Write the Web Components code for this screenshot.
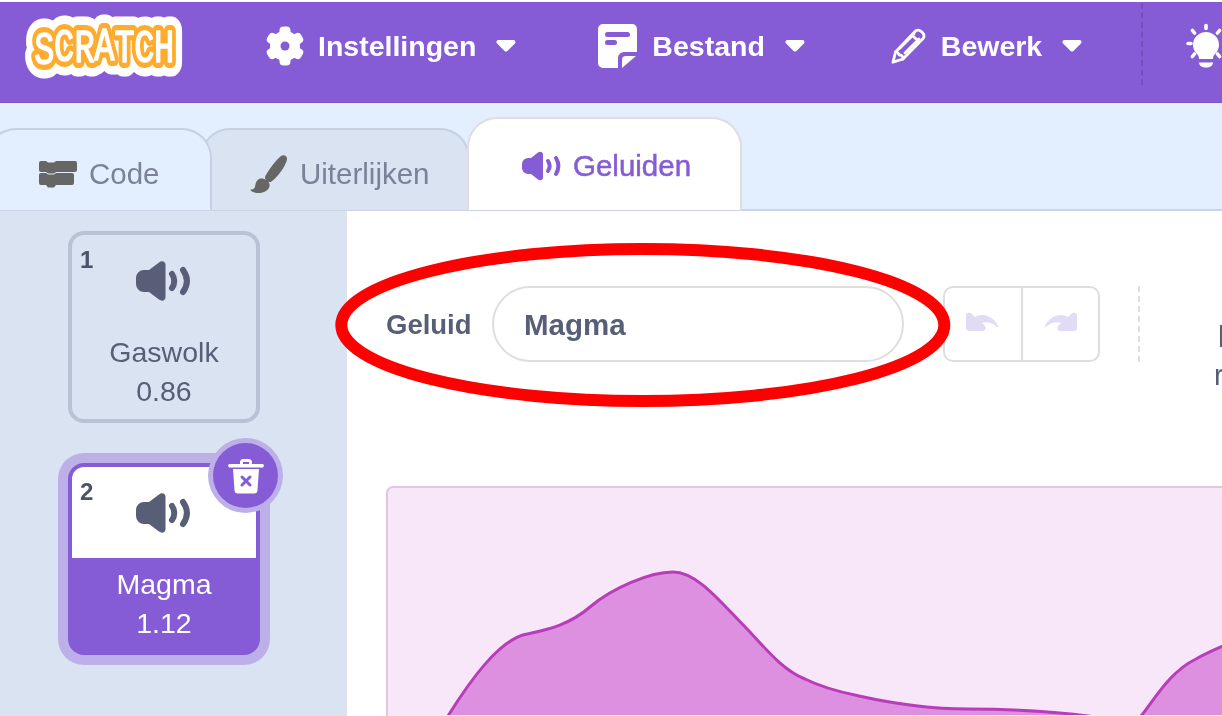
<!DOCTYPE html>
<html lang="nl">
<head>
<meta charset="utf-8">
<title>Scratch geluiden</title>
<style>
  html, body { margin: 0; height: 716px; overflow: hidden; background: #fff; }
  body { font-family: "Liberation Sans", Arial, sans-serif; color: #575e75; position: relative; }
</style>
</head>
<body>
<editor-shell>
  <menu-bar slot="menu">
    <scratch-logo></scratch-logo>
    <menu-item icon="gear" w="36" h="40" style="margin-left:84px">Instellingen</menu-item>
    <menu-item icon="file" w="39" h="44" style="margin-left:82px">Bestand</menu-item>
    <menu-item icon="pencil" w="36" h="36" style="margin-left:85px">Bewerk</menu-item>
    <menu-divider></menu-divider>
    <sc-icon name="bulb" w="44" h="48" style="margin:-10px 0 0 41px"></sc-icon>
  </menu-bar>
  <tab-row slot="tabs">
    <tab-item icon="code" w="38" h="28" state="first">Code</tab-item>
    <tab-item icon="brush" w="38" h="38" state="back">Uiterlijken</tab-item>
    <tab-item icon="speaker-purple" w="39" h="30" state="active">Geluiden</tab-item>
  </tab-row>
  <sound-list slot="side">
    <sound-card index="1" name="Gaswolk" length="0.86"></sound-card>
    <sound-card index="2" name="Magma" length="1.12" selected></sound-card>
  </sound-list>
  <sound-editor slot="main" name="Magma"></sound-editor>
</editor-shell>
<red-mark></red-mark>

<script>
const ICONS = {
  gear: `<svg viewBox="0 0 36 40"><g fill="#fff"><circle cx="18" cy="20" r="15"/><rect x="12.500" y="0.500" width="11" height="39" rx="4"/><rect x="12.500" y="0.500" width="11" height="39" rx="4" transform="rotate(60 18 20)"/><rect x="12.500" y="0.500" width="11" height="39" rx="4" transform="rotate(120 18 20)"/></g><circle cx="18" cy="20" r="4.500" fill="#855cd6"/></svg>`,
  file: `<svg viewBox="0 0 39 44"><path fill="#fff" d="M5 0h29a5 5 0 0 1 5 5v23H26a6 6 0 0 0-6 6v10H5a5 5 0 0 1-5-5V5a5 5 0 0 1 5-5z"/><path fill="#fff" d="M24 44V36a4 4 0 0 1 4-4h10z"/><rect x="7" y="8" width="25" height="5" rx="2.500" fill="#855cd6"/><rect x="7" y="16" width="12" height="5" rx="2.500" fill="#855cd6"/></svg>`,
  pencil: `<svg viewBox="0 0 36 36"><g fill="none" stroke="#fff" stroke-width="2.800" stroke-linejoin="round" stroke-linecap="round"><path d="M25 3.500a4 4 0 0 1 6-.2l1.800 1.800a4 4 0 0 1-.2 6L13 31l-10 3.200L5.500 24z"/><path d="M22 7l7 7M5.500 24c3-.5 3 3 4 3s4 .5 3.500 4M10 20L24 6M15 25L29 11"/></g></svg>`,
  bulb: `<svg viewBox="0 0 44 48"><g fill="none" stroke="#fff" stroke-width="3.600" stroke-linecap="round"><path d="M22 2.500v3M4 20.500h3M8.500 7.500l2 2.500M35.500 7.500l-2 2.500M8.500 33.500l2-2.500M35.500 33.500l-2-2.500"/></g><path fill="#fff" d="M22 9a13 13 0 0 1 13 13c0 4-2 7-4 9-1.500 1.500-2 3-2 5h-14c0-2-.5-3.500-2-5-2-2-4-5-4-9A13 13 0 0 1 22 9z"/><path fill="#fff" d="M15 39.500h14c0 3-3 5-7 5s-7-2-7-5z"/></svg>`,
  code: `<svg viewBox="0 0 38 28"><path fill="#666" d="M2 1h5l2 1.500h6l2-1.500h19a2 2 0 0 1 2 2v7a2 2 0 0 1-2 2H17l-2 1.500H9L7 12H2a2 2 0 0 1-2-2V3a2 2 0 0 1 2-2z"/><path fill="#666" d="M2 13h5l2 1.500h6l2-1.500h16a2 2 0 0 1 2 2v8a2 2 0 0 1-2 2H17l-2 2.500H9L7 25H2a2 2 0 0 1-2-2v-8a2 2 0 0 1 2-2z"/></svg>`,
  brush: `<svg viewBox="0 0 38 38"><path fill="#666" d="M31 1c3-2 6.500 0 6 3.500C35.500 11 28 22 21.500 26.500c-1.500 1-3.500.7-5-.8-1.500-1.500-2-3.500-1-5C19.500 14 26 5 31 1z"/><path fill="#666" d="M9 24c4-1.500 9.500 1 10.500 5 .8 4.500-3.500 8.500-9 9-4.500.4-9.500-1-10.200-3.500 3 .5 4.500-1 5-4 .4-3 1.700-5.500 3.700-6.500z"/></svg>`,
  speaker: `<svg viewBox="0 0 56 40"><path fill="#575e75" d="M23 1.500c3-2.300 6.500-1 6.500 2.500v32c0 3.500-3.500 4.800-6.500 2.500L13 31H8a8 8 0 0 1-8-8v-6a8 8 0 0 1 8-8h5z"/><g fill="none" stroke="#575e75" stroke-linecap="round"><path stroke-width="6" d="M36 13c3 4 3 10 0 14"/><path stroke-width="6" d="M47 9c5 7 5 15 0 22"/></g></svg>`,
  'speaker-purple': `<svg viewBox="0 0 39 30"><path fill="#855cd6" d="M16 1.500c2.500-1.700 5-.6 5 2v23c0 2.600-2.500 3.700-5 2L9 23H6a6 6 0 0 1-6-6v-4a6 6 0 0 1 6-6h3z"/><g fill="none" stroke="#855cd6" stroke-linecap="round"><path stroke-width="4" d="M26 10c2 3 2 7 0 10"/><path stroke-width="4" d="M34 7c3 5 3 11 0 16"/></g></svg>`,
  trash: `<svg viewBox="0 0 36 36"><path fill="#fff" d="M1.500 6h33a1.500 1.500 0 0 1 1 2.500l-.5 1H1l-.5-1A1.500 1.500 0 0 1 1.500 6zM12 6V3.500A3 3 0 0 1 15 1h6a3 3 0 0 1 3 2.500V6h-3V4h-6v2z"/><path fill="#fff" d="M5 11h26l-1.500 21a3.500 3.500 0 0 1-3.500 3.500H10A3.500 3.500 0 0 1 6.500 32z"/><path stroke="#855cd6" stroke-width="3" stroke-linecap="round" d="M14 19l8 8M22 19l-8 8"/></svg>`,
  undo: `<svg viewBox="0 0 34 21"><path fill="#e2dbf6" d="M2 1Q4 0 6 2L9 5C15 1 26 2 32 14Q33 16 31 15C27 11 21 9 16 11L19 14Q21 18 17 19H3Q0 19 0 16V3Q0 1 2 1z"/></svg>`
};

class ScIcon extends HTMLElement {
  constructor() {
    super();
    this.attachShadow({ mode: 'open' });
    const w = this.getAttribute('w');
    const h = this.getAttribute('h');
    this.shadowRoot.innerHTML = `
      <style>
        :host { display: block; width: ${w}px; height: ${h}px; flex: none; }
        svg { display: block; width: 100%; height: 100%; overflow: visible; }
        :host([flip]) svg { transform: scaleX(-1); }
      </style>
      ${ICONS[this.getAttribute('name')]}`;
  }
}
customElements.define('sc-icon', ScIcon);

class EditorShell extends HTMLElement {
  constructor() {
    super();
    this.attachShadow({ mode: 'open' });
    this.shadowRoot.innerHTML = `
      <style>
        :host { display: flex; flex-direction: column; height: 716px; overflow: hidden; background: #e3eeff; filter: blur(.55px); }
        .top { height: 2px; background: #fff; flex: none; }
        .body { flex: 1; display: flex; min-height: 0; border-top: 2px solid #c9d4e6; margin-top: -1px; }
      </style>
      <div class="top"></div>
      <slot name="menu"></slot>
      <slot name="tabs"></slot>
      <div class="body">
        <slot name="side"></slot>
        <slot name="main"></slot>
      </div>`;
  }
}
customElements.define('editor-shell', EditorShell);

class MenuBar extends HTMLElement {
  constructor() {
    super();
    this.attachShadow({ mode: 'open' });
    this.shadowRoot.innerHTML = `
      <style>
        :host { display: flex; align-items: center; flex: none; height: 101px; padding-left: 23px; box-sizing: border-box; background: #855cd6; border-bottom: 1px solid #7c55cb; overflow: hidden; }
      </style>
      <slot></slot>`;
  }
}
customElements.define('menu-bar', MenuBar);

class ScratchLogo extends HTMLElement {
  constructor() {
    super();
    this.attachShadow({ mode: 'open' });
    this.shadowRoot.innerHTML = `
      <style>
        :host { display: block; width: 160px; height: 64px; flex: none; margin-top: -8px; }
        svg { display: block; overflow: visible; }
        text { font-family: "Liberation Mono", monospace; font-size: 46px; stroke-linejoin: round; stroke-linecap: round; }
      </style>
      <svg width="160" height="64" viewBox="23 14 160 64">
        <defs>
          <text id="word" transform="scale(.73 1)" x="47 74 102 129 157 184 211" y="62 59 60 58 60 60 60">SCRATCH</text>
        </defs>
        <use href="#word" fill="#fff" stroke="#fff" stroke-width="29"/>
        <use href="#word" fill="#ffab2e" stroke="#ffab2e" stroke-width="12"/>
        <use href="#word" fill="#fff" stroke="#fff" stroke-width="1.600"/>
      </svg>`;
  }
}
customElements.define('scratch-logo', ScratchLogo);

class MenuItem extends HTMLElement {
  constructor() {
    super();
    this.attachShadow({ mode: 'open' });
    this.shadowRoot.innerHTML = `
      <style>
        :host { display: flex; align-items: center; flex: none; margin-top: -12px; color: #fff; font: 700 28.500px "Liberation Sans", Arial, sans-serif; }
        .label { margin-left: 15px; white-space: nowrap; }
        svg { display: block; margin: -2px 0 0 20px; }
      </style>
      <sc-icon name="${this.getAttribute('icon')}" w="${this.getAttribute('w')}" h="${this.getAttribute('h')}"></sc-icon>
      <span class="label"><slot></slot></span>
      <svg width="20" height="13" viewBox="0 0 20 13"><path d="M2.500 3h15l-7.500 7.500z" fill="#fff" stroke="#fff" stroke-width="4" stroke-linejoin="round"/></svg>`;
  }
}
customElements.define('menu-item', MenuItem);

class MenuDivider extends HTMLElement {
  constructor() {
    super();
    this.attachShadow({ mode: 'open' });
    this.shadowRoot.innerHTML = `
      <style>
        :host { display: block; flex: none; width: 0; height: 82px; margin: -16px 0 0 59px; border-left: 2px dashed #7450bd; }
      </style>`;
  }
}
customElements.define('menu-divider', MenuDivider);

class TabRow extends HTMLElement {
  constructor() {
    super();
    this.attachShadow({ mode: 'open' });
    this.shadowRoot.innerHTML = `
      <style>
        :host { display: flex; align-items: flex-end; flex: none; height: 107px; margin-left: -14px; }
      </style>
      <slot></slot>`;
  }
}
customElements.define('tab-row', TabRow);

class TabItem extends HTMLElement {
  constructor() {
    super();
    this.attachShadow({ mode: 'open' });
    this.shadowRoot.innerHTML = `
      <style>
        :host { display: flex; align-items: center; box-sizing: border-box; flex: none; height: 82px; padding-top: 7px; border: 2px solid #c5d1e3; border-bottom: 0; border-radius: 30px 30px 0 0; font: 29.500px "Liberation Sans", Arial, sans-serif; color: #7b8298; white-space: nowrap; position: relative; }
        :host([state=first]) { width: 226px; padding-left: 51px; background: #e3eeff; z-index: 1; }
        :host([state=back]) { width: 270px; padding-left: 48px; margin-left: -12px; background: #d9e3f2; }
        :host([state=active]) { width: 275px; height: 93px; padding: 2px 0 0 53px; margin-left: -3px; background: #fff; border-color: #dedede; color: #855cd6; z-index: 2; -webkit-text-stroke: .5px #855cd6; }
        .label { margin-left: 12px; }
      </style>
      <sc-icon name="${this.getAttribute('icon')}" w="${this.getAttribute('w')}" h="${this.getAttribute('h')}"></sc-icon>
      <span class="label"><slot></slot></span>`;
  }
}
customElements.define('tab-item', TabItem);

class SoundList extends HTMLElement {
  constructor() {
    super();
    this.attachShadow({ mode: 'open' });
    this.shadowRoot.innerHTML = `
      <style>
        :host { display: flex; flex-direction: column; align-items: flex-start; gap: 40px; box-sizing: border-box; flex: none; width: 347px; padding: 20px 0 0 68px; background: #d9e3f2; border-right: 2px solid #dfe2e8; }
      </style>
      <slot></slot>`;
  }
}
customElements.define('sound-list', SoundList);

class SoundCard extends HTMLElement {
  constructor() {
    super();
    this.attachShadow({ mode: 'open' });
    this.shadowRoot.innerHTML = `
      <style>
        :host { display: flex; flex-direction: column; box-sizing: border-box; width: 192px; height: 192px; border: 4px solid #b7c3d5; border-radius: 16px; position: relative; font: 28.500px "Liberation Sans", Arial, sans-serif; color: #575e75; text-align: center; }
        :host([selected]) { border-color: #855cd6; background: #855cd6; color: #fff; box-shadow: 0 0 0 10px #bdb0e8; height: 192px; }
        .thumb { height: 127px; box-sizing: border-box; padding-top: 26px; display: flex; justify-content: center; position: relative; flex: none; border-radius: 12px 12px 0 0; }
        :host([selected]) .thumb { background: #fff; height: 91px; padding-top: 26px; }
        .num { position: absolute; left: 8px; top: 12px; font-weight: 700; font-size: 24px; line-height: 26px; color: #4c5368; }
        .name { line-height: 39px; }
        :host(:not([selected])) .name { margin-top: -29px; }
        :host([selected]) .name { margin-top: 7px; }
        .del { position: absolute; right: -22px; top: -24px; width: 65px; height: 65px; border-radius: 50%; background: #855cd6; box-shadow: 0 0 0 5px #bdb0e8; display: flex; align-items: center; justify-content: center; }
      </style>
      <div class="thumb">
        <span class="num">${this.getAttribute('index')}</span>
        <sc-icon name="speaker" w="56" h="40"></sc-icon>
      </div>
      <div class="name">${this.getAttribute('name')}</div>
      <div class="name" style="margin-top:0">${this.getAttribute('length')}</div>
      ${this.hasAttribute('selected') ? '<div class="del"><sc-icon name="trash" w="36" h="36"></sc-icon></div>' : ''}`;
  }
}
customElements.define('sound-card', SoundCard);

class SoundEditor extends HTMLElement {
  constructor() {
    super();
    this.attachShadow({ mode: 'open' });
    this.shadowRoot.innerHTML = `
      <style>
        :host { display: flex; flex-direction: column; flex: 1; min-width: 0; box-sizing: border-box; padding: 75px 0 0 39px; background: #fff; overflow: hidden; }
        .row { display: flex; align-items: center; flex: none; height: 76px; }
        .label { font-weight: 700; font-size: 27.500px; color: #575e75; width: 106px; flex: none; padding-top: 2px; }
        .name { box-sizing: border-box; width: 412px; height: 76px; flex: none; border: 2px solid #dedede; border-radius: 38px; padding: 2px 0 0 30px; display: flex; align-items: center; font-weight: 700; font-size: 29.500px; color: #575e75; }
        .history { display: flex; box-sizing: border-box; width: 157px; height: 76px; margin-left: 39px; flex: none; border: 2px solid #dedede; border-radius: 10px; }
        .history div { flex: 1; display: flex; align-items: center; justify-content: center; padding-bottom: 3px; }
        .history div + div { border-left: 2px solid #dedede; }
        .sep { width: 0; height: 76px; margin-left: 38px; flex: none; border-left: 2px dashed #dedede; }
        .clip { align-self: flex-start; margin-left: 74px; font-size: 29px; line-height: 38px; white-space: nowrap; color: #575e75; padding-top: 32px; }
        .clip span { display: block; }
        wave-view { margin-top: 124px; }
      </style>
      <div class="row">
        <div class="label">Geluid</div>
        <div class="name">${this.getAttribute('name')}</div>
        <div class="history">
          <div><sc-icon name="undo" w="34" h="21"></sc-icon></div>
          <div><sc-icon name="undo" w="34" h="21" flip></sc-icon></div>
        </div>
        <div class="sep"></div>
        <div class="clip"><span style="margin-left:4px">l</span><span>r</span></div>
      </div>
      <wave-view></wave-view>`;
  }
}
customElements.define('sound-editor', SoundEditor);

class WaveView extends HTMLElement {
  constructor() {
    super();
    this.attachShadow({ mode: 'open' });
    this.shadowRoot.innerHTML = `
      <style>
        :host { display: block; flex: 1; box-sizing: border-box; width: 900px; background: #f7e7f8; border: 2px solid #dfc9e0; border-bottom: 0; border-radius: 7px 7px 0 0; overflow: hidden; }
        svg { display: block; }
        path { fill: #dd90df; stroke: #b93cba; stroke-width: 3; }
      </style>
      <svg width="834" height="227" viewBox="388 489 834 227">
        <path d="M440 730C470 680 500 640 527 635C545 631 568 627 590 608C612 589 650 573 673 573C698 573 722 605 750 633C770 655 785 672 805 680C825 690 845 694 859 697C895 705 935 710 968 710C1000 710 1060 711 1120 722V730z"/>
        <path d="M1130 730C1150 710 1165 675 1196 660C1205 655 1215 650 1240 640V730z"/>
      </svg>`;
  }
}
customElements.define('wave-view', WaveView);

// the red ring drawn over the screenshot
class RedMark extends HTMLElement {
  constructor() {
    super();
    this.attachShadow({ mode: 'open' });
    this.shadowRoot.innerHTML = `
      <style>
        :host { display: block; position: absolute; left: 335px; top: 243px; width: 616px; height: 164px; pointer-events: none; }
        svg { display: block; }
      </style>
      <svg width="616" height="164" viewBox="335 243 616 164"><ellipse cx="642.800" cy="325" rx="301.500" ry="76" fill="none" stroke="#ff0000" stroke-width="12"/></svg>`;
  }
}
customElements.define('red-mark', RedMark);
</script>
</body>
</html>
